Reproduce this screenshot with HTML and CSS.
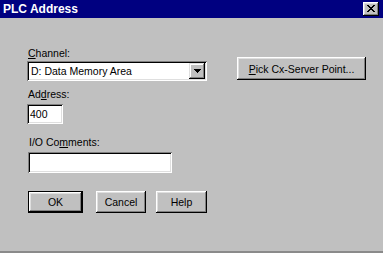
FILE: index.html
```html
<!DOCTYPE html>
<html lang="en">

<head>
    <meta charset="UTF-8">
    <title>PLC Address</title>
    <link rel="stylesheet" href="styles.css">
</head>

<body>
    <div class="window">
        <div class="titlebar">
            <span class="title">PLC Address</span>
            <div class="close_btn">
                <svg width="8" height="7" viewBox="0 0 8 7" shape-rendering="crispEdges"><path fill="#000" d="M0 0h2v1H0zM6 0h2v1H6zM1 1h2v1H1zM5 1h2v1H5zM2 2h4v1H2zM3 3h2v1H3zM2 4h4v1H2zM1 5h2v1H1zM5 5h2v1H5zM0 6h2v1H0zM6 6h2v1H6z"/></svg>
            </div>
        </div>
        <div class="content">
            <div class="fields">
                <div class="lbl"><u>C</u>hannel:</div>
                <div class="combo">
                    <span class="combo_text">D: Data Memory Area</span>
                    <div class="drop_btn">
                        <svg width="7" height="4" viewBox="0 0 7 4" shape-rendering="crispEdges"><path fill="#000" d="M0 0h7v1H0zM1 1h5v1H1zM2 2h3v1H2zM3 3h1v1H3z"/></svg>
                    </div>
                </div>
                <div class="lbl lbl_addr">Ad<u>d</u>ress:</div>
                <div class="edit edit_addr">400</div>
                <div class="lbl lbl_comm">I/O Co<u>m</u>ments:</div>
                <div class="edit edit_comm"></div>
                <div class="buttons">
                    <div class="btn btn_default btn_ok">OK</div>
                    <div class="btn btn_cancel">Cancel</div>
                    <div class="btn btn_help">Help</div>
                </div>
            </div>
            <div class="side">
                <div class="btn btn_pick"><u>P</u>ick Cx-Server Point...</div>
            </div>
        </div>
    </div>
</body>

</html>
```

FILE: styles.css
```css
* {
    margin: 0;
    padding: 0;
    box-sizing: border-box;
}

body {
    background: #c0c0c0;
    font-family: "Liberation Sans", Arial, sans-serif;
    font-size: 10.5px;
    color: #000;
}

.window {
    width: 383px;
    height: 253px;
    background: #c0c0c0;
    border-bottom: 2px solid #8a8a8a;
}

.titlebar {
    height: 18px;
    background: #000080;
    display: flex;
    align-items: center;
    justify-content: space-between;
    padding: 0 4px 0 3px;
}
.title {
    color: #fff;
    font-weight: bold;
    font-size: 12px;
    line-height: 14px;
}
.close_btn {
    width: 16px;
    height: 14px;
    background: #c0c0c0;
    box-shadow: inset -1px -1px #000, inset 1px 1px #fff, inset -2px -2px #808080, inset 2px 2px #dfdfdf;
    display: flex;
    align-items: center;
    justify-content: center;
    padding: 0 1px 1px 0;
}
.close_btn svg {
    display: block;
}

.content {
    display: flex;
}

.fields {
    padding: 29px 0 0 27px;
    width: 207px;
}
.lbl {
    height: 13px;
    line-height: 13px;
    padding-left: 1px;
}
.lbl u {
    text-decoration-thickness: 1px;
    text-underline-offset: 1px;
}
.lbl_addr {
    margin-top: 7px;
}
.lbl_comm {
    margin-top: 12px;
    padding-left: 2px;
}

.combo {
    margin-top: 1px;
    width: 180px;
    height: 20px;
    background: #fff;
    box-shadow: inset 1px 1px #808080, inset -1px -1px #fff, inset 2px 2px #000, inset -2px -2px #dfdfdf;
    display: flex;
    align-items: center;
    justify-content: space-between;
    padding: 2px;
}
.combo_text {
    padding-left: 2px;
    line-height: 16px;
}
.drop_btn {
    width: 16px;
    height: 16px;
    background: #c0c0c0;
    box-shadow: inset -1px -1px #000, inset 1px 1px #dfdfdf, inset -2px -2px #808080, inset 2px 2px #fff;
    display: flex;
    align-items: center;
    justify-content: center;
    padding-bottom: 1px;
}
.drop_btn svg {
    display: block;
}

.edit {
    background: #fff;
    box-shadow: inset 1px 1px #808080, inset -1px -1px #fff, inset 2px 2px #000, inset -2px -2px #dfdfdf;
    padding: 0 3px;
    display: flex;
    align-items: center;
}
.edit_addr {
    margin-top: 3px;
    width: 36px;
    height: 20px;
}
.edit_comm {
    margin: 3px 0 0 1px;
    width: 144px;
    height: 21px;
}

.buttons {
    display: flex;
    margin: 18px 0 0 1px;
}
.btn {
    height: 22px;
    background: #c0c0c0;
    box-shadow: inset -1px -1px #000, inset 1px 1px #fff, inset -2px -2px #808080, inset 2px 2px #dfdfdf;
    display: flex;
    align-items: center;
    justify-content: center;
}
.btn_default {
    border: 1px solid #000;
}
.btn_ok {
    width: 55px;
}
.btn_cancel {
    width: 50px;
    margin-left: 13px;
}
.btn_help {
    width: 51px;
    margin-left: 10px;
}

.side {
    padding: 39px 0 0 30px;
}
.btn_pick {
    width: 129px;
    height: 23px;
}
```
